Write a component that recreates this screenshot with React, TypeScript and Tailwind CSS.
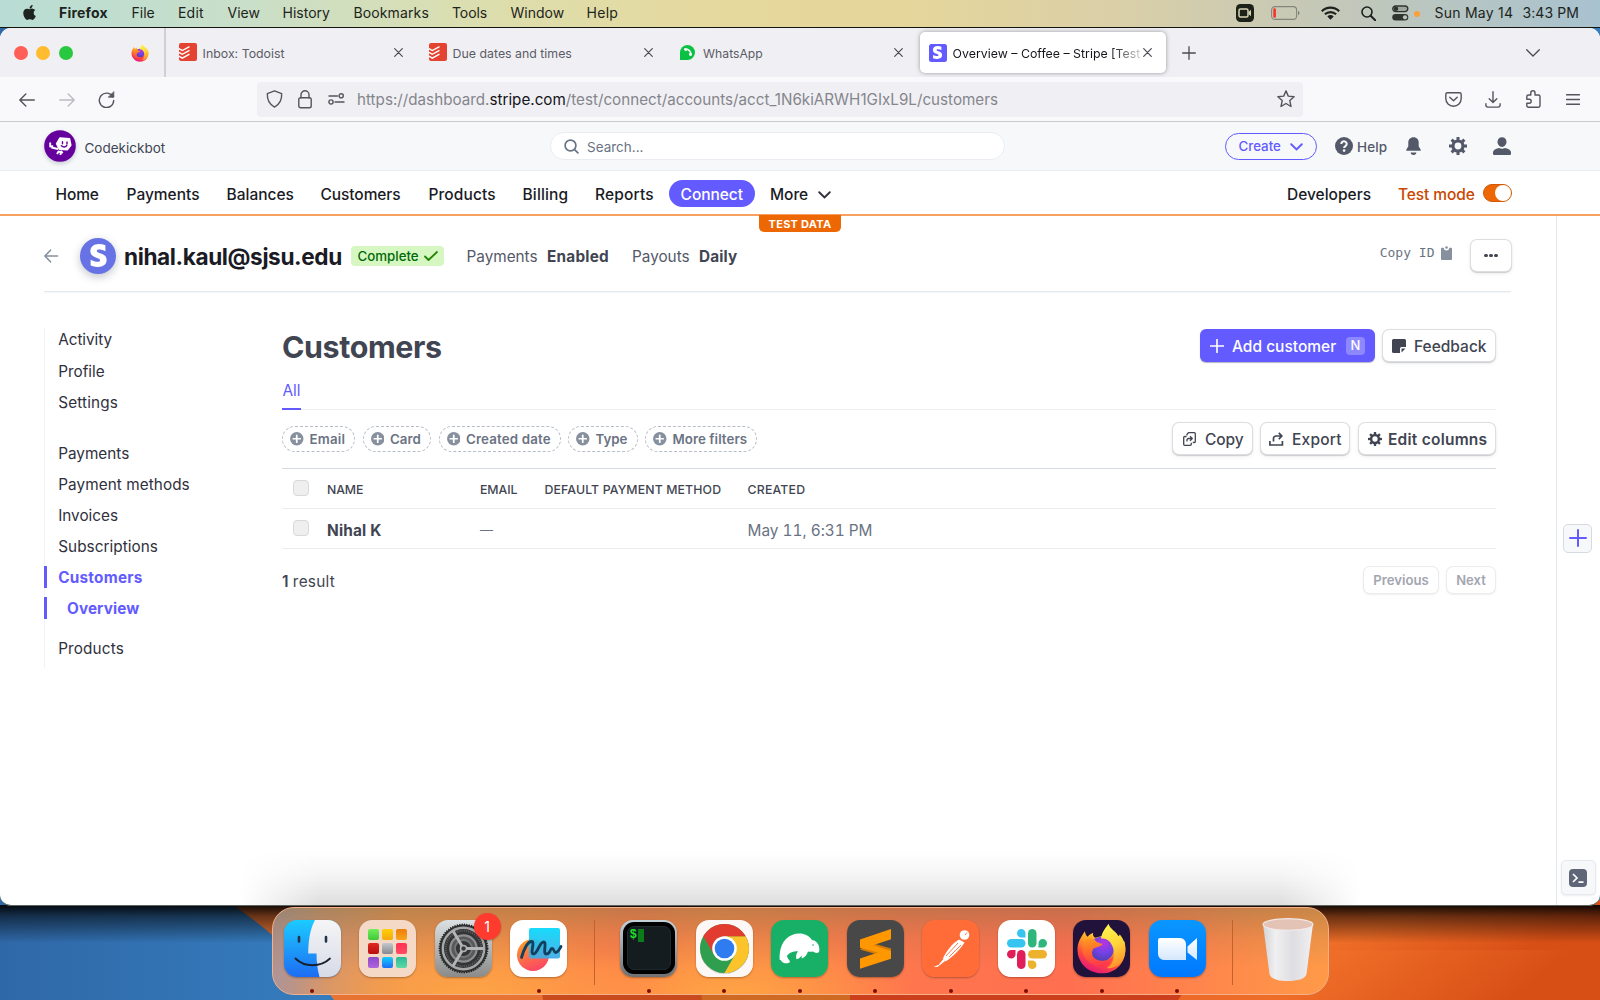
import React from "react";
import { FaApple, FaPhoneAlt, FaStripeS } from "react-icons/fa";

const menuItems = [
  { label: "Firefox", cls: "w-[72.5px] font-bold tracking-[0.2px]" },
  { label: "File", cls: "w-[46.5px]" },
  { label: "Edit", cls: "w-[49.5px] tracking-[0.2px]" },
  { label: "View", cls: "w-[55px]" },
  { label: "History", cls: "w-[71px]" },
  { label: "Bookmarks", cls: "w-[98.5px] tracking-[0.12px]" },
  { label: "Tools", cls: "w-[58.5px] tracking-[-0.1px]" },
  { label: "Window", cls: "w-[76px]" },
  { label: "Help", cls: "w-[50px] tracking-[0.3px]" },
];

function MenuBar() {
  return (
    <div className="flex h-[27px] shrink-0 items-center bg-[linear-gradient(90deg,#b8ddd4_0%,#c9dfc9_15%,#dcdeae_30%,#e6d99e_45%,#e5d69b_57%,#dacfa8_70%,#c4c8b8_83%,#a8c2cf_100%)] pb-[2px] text-[14px] text-[#1d2420]">
      <FaApple className="ml-[21px] mr-[21px] size-[17px]" />
      {menuItems.map((m) => (
        <span key={m.label} className={`shrink-0 whitespace-nowrap ${m.cls}`}>{m.label}</span>
      ))}
      <div className="flex-1" />
      <svg className="mr-[16.5px] mt-px h-[18px] w-[18px]" viewBox="0 0 18 18">
        <rect width="18" height="18" rx="4.5" fill="#1d2219" />
        <rect x="3" y="5" width="9" height="8" rx="1.5" fill="none" stroke="#d8d3b4" strokeWidth="1.5" />
        <path d="M12.500 8l2.500-2.200v6.400L12.500 10z" fill="#d8d3b4" />
      </svg>
      <svg className="mr-[21px] mt-px h-[14px] w-[29px]" viewBox="0 0 29 14">
        <rect x="0.600" y="0.6" width="25" height="12.8" rx="3.500" fill="none" stroke="#85867b" strokeWidth="1.1" />
        <rect x="2.300" y="2.300" width="2.600" height="9.400" rx="1.2" fill="#f8312b" />
        <path d="M27 4.800q1.500 0.800 1.500 2.200t-1.500 2.200z" fill="#7c7e76" />
      </svg>
      <svg className="mr-[21.500px] h-[14px] w-[19px]" viewBox="0 0 19 14" fill="none" stroke="#1d211e" strokeWidth="2.2">
        <path d="M0.800 5.200a12.500 12.500 0 0 1 17.400 0" />
        <path d="M3.900 8.300a8.200 8.200 0 0 1 11.200 0" />
        <path d="M9.500 13.700L6.300 10.500a4.700 4.700 0 0 1 6.400 0z" fill="#1d211e" stroke="none" />
      </svg>
      <svg className="mr-[16px] mt-[2px] h-[15px] w-[15px]" viewBox="0 0 15 15" fill="none" stroke="#1d211e" strokeWidth="1.600">
        <circle cx="6" cy="6" r="5" />
        <path d="M9.700 9.700l4.500 4.500" strokeWidth="2" strokeLinecap="round" />
      </svg>
      <svg className="mr-[5px] mt-px h-[16px] w-[17px]" viewBox="0 0 17 16">
        <rect x="0.800" y="1" width="15" height="5.600" rx="2.800" fill="#9ea59d" stroke="#30342f" strokeWidth="1.400" />
        <circle cx="4" cy="3.800" r="2.200" fill="#30342f" />
        <rect x="0.300" y="9" width="16" height="6.600" rx="3.300" fill="#30342f" />
        <circle cx="13" cy="12.300" r="2.100" fill="#b8c4bd" />
      </svg>
      <span className="mr-[14.500px] mt-[2px] size-[6px] rounded-full bg-[#f8a13a]" />
      <span className="w-[88px] whitespace-nowrap tracking-[0.25px]">Sun May 14</span>
      <span className="w-[77.500px] whitespace-nowrap tracking-[0.07px]">3:43 PM</span>
    </div>
  );
}

function FirefoxLogo({ className, id }: { className: string; id: string }) {
  return (
    <svg className={className} viewBox="3 2 51 52">
      <defs>
        <linearGradient id={`${id}-body`} x1="0.750" y1="0.1" x2="0.3" y2="1">
          <stop offset="0" stopColor="#ffe63c" />
          <stop offset="0.350" stopColor="#ff9d26" />
          <stop offset="0.650" stopColor="#ff4a3f" />
          <stop offset="1" stopColor="#e3147d" />
        </linearGradient>
        <linearGradient id={`${id}-flame`} x1="0.300" y1="0" x2="0.600" y2="1">
          <stop offset="0" stopColor="#fff44f" />
          <stop offset="0.500" stopColor="#ffd53a" />
          <stop offset="1" stopColor="#ff8f2a" />
        </linearGradient>
        <radialGradient id={`${id}-globe`} cx="0.600" cy="0.250" r="0.800">
          <stop offset="0" stopColor="#b833e1" />
          <stop offset="0.500" stopColor="#7542e5" />
          <stop offset="1" stopColor="#4a3fb0" />
        </radialGradient>
        <linearGradient id={`${id}-head`} x1="0.300" y1="0" x2="0.400" y2="1">
          <stop offset="0" stopColor="#ff9a1f" />
          <stop offset="0.450" stopColor="#ff6b2d" />
          <stop offset="1" stopColor="#ff3350" />
        </linearGradient>
      </defs>
      <path d="M4 29C4 22 7 17 11.500 10.300C12 13 13 15 14.500 16C16 14 18 13 20 12C19.500 14 20 16 22 17L38 13L52 21C54 30 53 38 47 45.500C42 51 35 53.400 28.500 53.300C14 53 4 42 4 29Z" fill={`url(#${id}-body)`} />
      <circle cx="28.500" cy="28.500" r="12.500" fill={`url(#${id}-globe)`} />
      <path d="M28 18C29 10 33 7 35.700 2.700C37 8 43 10 45.500 15C46.500 15.500 47 14.500 47 13.500C52 19 54.500 28 51.500 37C48 46 40 49 34 48C43 43 43.500 30 37.500 22C35 18.500 31 17.500 28 18Z" fill={`url(#${id}-flame)`} />
      <path d="M10 22C13 17 20 16 22 19.500C24 22.300 28 22.500 29.500 23.300C28 26.500 23 26 20 28.500C17 34 20 39.500 28 40.500C34 41 38 39 40.500 36C39 44 32 48 26 46.500C14 44 6 34 10 22Z" fill={`url(#${id}-head)`} />
    </svg>
  );
}

function TodoistIcon() {
  return (
    <svg className="size-[18px] shrink-0" viewBox="0 0 18 18">
      <rect width="18" height="18" rx="2" fill="#e44332" />
      <path d="M0 5.600l3.300 1.900L10.500 3.600M0 9.400l3.300 1.900L10.500 7.400M0 13.200l3.300 1.900L10.500 11.200" fill="none" stroke="#fff" strokeWidth="1.400" />
    </svg>
  );
}

function Close({ className = "" }: { className?: string }) {
  return (
    <svg className={`size-[9px] shrink-0 ${className}`} viewBox="0 0 9 9" stroke="#4b4b52" strokeWidth="1.200" strokeLinecap="round">
      <path d="M0.700 0.700l7.600 7.600M8.300 0.700L0.700 8.300" />
    </svg>
  );
}

function StripeTile() {
  return (
    <span className="flex size-[18px] shrink-0 items-center justify-center rounded-[2.5px] bg-[#635bff]">
      <FaStripeS className="size-[13px] text-white" />
    </span>
  );
}

function TabStrip() {
  return (
    <div className="flex h-[49px] shrink-0 items-center bg-[#f0f0f4] text-[12.35px] text-[#5b5b66]">
      <span className="ml-[14px] size-[14px] rounded-full bg-[#ff5f57]" />
      <span className="ml-[8.3px] size-[14px] rounded-full bg-[#febc2e]" />
      <span className="ml-[8.3px] size-[14px] rounded-full bg-[#28c840]" />
      <FirefoxLogo className="ml-[58.5px] h-[18px] w-[18px]" id="tab" />
      <span className="ml-[15px] h-full w-[2px] bg-[#cfcfd4]" />
      <div className="ml-[13px] flex w-[250px] items-center">
        <TodoistIcon />
        <span className="ml-[5.500px] w-[191px] pt-[3px]">Inbox: Todoist</span>
        <Close />
      </div>
      <div className="flex w-[250px] items-center">
        <TodoistIcon />
        <span className="ml-[5.500px] w-[191px] pt-[3px]">Due dates and times</span>
        <Close />
      </div>
      <div className="flex w-[240.500px] items-center">
        <span className="ml-[1px] flex size-[15px] items-center justify-center rounded-full rounded-bl-[4px] bg-[#0bc144]">
          <FaPhoneAlt className="size-[8px] rotate-[-90deg] -scale-x-100 text-white" />
        </span>
        <span className="ml-[8px] w-[190.500px] pt-[3px] text-[12.2px]">WhatsApp</span>
        <Close />
      </div>
      <div className="flex h-[41px] w-[246px] items-center rounded-[5px] bg-white pl-[9px] text-[#15141a] shadow-[0_0_4px_rgba(60,60,70,0.5)]">
        <StripeTile />
        <span className="ml-[6px] w-[189.500px] whitespace-nowrap pt-[3px] [mask-image:linear-gradient(90deg,#000_84%,rgba(0,0,0,0.200)_99%)]">Overview – Coffee – Stripe [Test</span>
        <Close className="ml-[1px]" />
      </div>
      <svg className="ml-[16.500px] size-[14px]" viewBox="0 0 14 14" stroke="#4b4b55" strokeWidth="1.300" strokeLinecap="round"><path d="M7 0.700v12.600M0.700 7h12.600" /></svg>
      <svg className="ml-auto mr-[60px] h-[8px] w-[14px]" viewBox="0 0 14 8" fill="none" stroke="#4b4b55" strokeWidth="1.300" strokeLinecap="round"><path d="M0.700 0.700L7 7l6.300-6.300" /></svg>
    </div>
  );
}

function NavBar() {
  const s = { fill: "none", stroke: "#54545e", strokeWidth: 1.4, strokeLinecap: "round" as const, strokeLinejoin: "round" as const };
  return (
    <div className="flex h-[45px] shrink-0 items-center border-b border-[#cccccf] bg-[#f9f9fb]">
      <svg className="ml-[18.500px] mt-px h-[14px] w-[16px]" viewBox="0 0 16 14" {...s}><path d="M15.300 7H0.900M6.800 0.900L0.800 7l6 6.100" /></svg>
      <svg className="ml-[24px] mt-px h-[14px] w-[16px]" viewBox="0 0 16 14" {...s} stroke="#bcbcc1"><path d="M0.700 7h14.400M9.200 0.900l6 6.100-6 6.100" /></svg>
      <svg className="ml-[23.500px] mt-px h-[17px] w-[17px]" viewBox="0 0 17 17" {...s}>
        <path d="M14.900 6A7.200 7.200 0 1 0 15.700 9.500" />
        <path d="M15.800 1v5.200h-5.200z" fill="#54545e" strokeWidth="0.800" />
      </svg>
      <div className="ml-[142px] flex h-[35px] w-[1046px] items-center rounded-[4px] bg-[#f0f0f4]">
        <svg className="ml-[9px] h-[18px] w-[17px]" viewBox="0 0 17 18" {...s}><path d="M8.500 0.900L15.700 3.600C15.900 9.500 13.800 14.500 8.500 17.100C3.200 14.500 1.100 9.500 1.300 3.600z" /></svg>
        <svg className="ml-[15px] h-[19px] w-[14px]" viewBox="0 0 14 19" {...s}><rect x="0.800" y="7.800" width="12.400" height="10" rx="1.800" /><path d="M3 7.800V4.800a4 4 0 0 1 8 0v3" /></svg>
        <svg className="ml-[16px] h-[12px] w-[17px]" viewBox="0 0 17 12" {...s}><path d="M1 3h8.500M7 9h9" /><circle cx="13.200" cy="2.800" r="2.100" /><circle cx="3" cy="9" r="2.100" /></svg>
        <div className="ml-[12px] w-[919.500px] whitespace-nowrap pt-[2px] text-[15.2px] tracking-[0.010px] text-[#85858c]">
          https://dashboard.<span className="text-[#15141a]">stripe.com</span>/test/connect/accounts/acct_1N6kiARWH1GIxL9L/customers
        </div>
        <svg className="h-[18px] w-[18px]" viewBox="0 0 18 18" {...s}><path d="M9 0.900l2.300 5.200 5.800 0.600-4.300 3.900 1.200 5.900L9 13.500l-5 3 1.200-5.900L0.900 6.700l5.800-0.600z" /></svg>
      </div>
      <svg className="ml-[142px] h-[15px] w-[17px]" viewBox="0 0 17 15" {...s}><path d="M2.500 0.800h12a1.700 1.700 0 0 1 1.700 1.700v4a7.700 7.700 0 0 1-15.400 0v-4A1.700 1.700 0 0 1 2.500 0.800z" /><path d="M4.800 5.200l3.700 3.600 3.700-3.600" /></svg>
      <svg className="ml-[23px] h-[17px] w-[16px]" viewBox="0 0 16 17" {...s}><path d="M8 0.800v10.600M4.200 7.800L8 11.500l3.800-3.700M0.900 12.800v1.300a2 2 0 0 0 2 2h10.200a2 2 0 0 0 2-2v-1.300" /></svg>
      <svg className="ml-[25px] h-[18px] w-[15px]" viewBox="0 0 15 18" {...s}><path d="M4.800 5V2.900a2.100 2.100 0 0 1 4.200 0V5h3.300a1.700 1.700 0 0 1 1.700 1.700v8.800a1.700 1.700 0 0 1-1.700 1.700H2.500a1.700 1.700 0 0 1-1.700-1.700v-2.300h2.400a2 2 0 0 0 0-4H0.800V6.700A1.700 1.700 0 0 1 2.500 5z" /></svg>
      <svg className="ml-[25px] h-[11px] w-[14px]" viewBox="0 0 14 11" {...s}><path d="M0.500 0.800h13M0.500 5.500h13M0.500 10.200h13" /></svg>
    </div>
  );
}

function Gear({ className }: { className: string }) {
  return (
    <svg className={className} viewBox="-9 -9 18 18" fill="none" stroke="currentColor">
      <circle r="5" strokeWidth="3.200" />
      {[0, 45, 90, 135, 180, 225, 270, 315].map((a) => (
        <path key={a} d="M0 -5.500V-9" strokeWidth="3" transform={`rotate(${a})`} />
      ))}
    </svg>
  );
}

function BotLogo() {
  return (
    <svg className="ml-[44px] size-[32px] drop-shadow-[0_2px_2px_rgba(60,66,87,0.250)]" viewBox="0 0 32 32">
      <circle cx="16" cy="16" r="15.800" fill="#66009c" />
      <path d="M16 8l9.500 0.700 1.300 6.500-3.500 4.500-8-0.500-2.700-5.500z" fill="#fff" stroke="#fff" strokeWidth="1.500" strokeLinejoin="round" />
      <path d="M18.500 11.800v2M23 12v2M17.300 15.800q3.200 2.600 5.500-0.300" fill="none" stroke="#66009c" strokeWidth="1.400" strokeLinecap="round" />
      <path d="M6.200 12.500v4l3-0.300M7.500 17.500l6.500 1.500M13 24l1.500-2.500 2.700 0.800 -1 2.700M16.500 21l2.300 2" fill="none" stroke="#fff" strokeWidth="1.900" strokeLinejoin="round" />
    </svg>
  );
}

function StripeHeader() {
  return (
    <div className="flex h-[49px] shrink-0 items-center border-b border-[#e9edf1] bg-[#f6f8fa] text-[13.5px]">
      <BotLogo />
      <span className="ml-[8.500px] w-[465.500px] pt-[4px] text-[#414552]">Codekickbot</span>
      <div className="flex h-[28px] w-[455px] items-center rounded-full border border-[#e9ecf0] bg-white text-[#687385]">
        <svg className="ml-[12.500px] size-[15px]" viewBox="0 0 15 15" fill="none" stroke="#687385" strokeWidth="1.700" strokeLinecap="round"><circle cx="6.500" cy="6.500" r="5.400" /><path d="M10.600 10.600l3.300 3.300" /></svg>
        <span className="ml-[8.500px] pt-[2px]">Search...</span>
      </div>
      <div className="ml-[220px] flex h-[27px] w-[92px] items-center rounded-full border-[1.5px] border-[#635bff] font-medium text-[#635bff]">
        <span className="ml-[12.500px] pt-[2px] text-[13.3px]">Create</span>
        <svg className="ml-[9.500px] mt-[2px] h-[8px] w-[13px]" viewBox="0 0 13 8" fill="none" stroke="#635bff" strokeWidth="1.900" strokeLinecap="round"><path d="M1.200 1.200l5.300 5.200 5.300-5.200" /></svg>
      </div>
      <svg className="ml-[18px] size-[18px]" viewBox="0 0 18 18">
        <circle cx="9" cy="9" r="9" fill="#545969" />
        <path d="M6.300 6.900a2.700 2.600 0 1 1 4.300 2.100c-1 0.700-1.500 1-1.500 2" fill="none" stroke="#f6f8fa" strokeWidth="2.100" />
        <circle cx="9.100" cy="13.600" r="1.300" fill="#f6f8fa" />
      </svg>
      <span className="ml-[4px] w-[49px] pt-[2px] font-medium tracking-[0.1px] text-[#545969]">Help</span>
      <svg className="h-[18px] w-[15px]" viewBox="0 0 15 18" fill="#545969"><path d="M7.500 0.200c3.300 0 5.200 2.300 5.200 5.300v3.800l2 3.500v0.900H0.300v-0.900l2-3.500V5.500c0-3 1.900-5.300 5.200-5.300zM4.700 15.500h5.600a2.800 2.400 0 0 1-5.600 0z" /></svg>
      <Gear className="ml-[28px] size-[18px] text-[#545969]" />
      <svg className="ml-[26px] h-[18px] w-[18px]" viewBox="0 0 18 18" fill="#545969"><path d="M9 0.200c2.700 0 4.500 2 4.500 4.600S11.500 10 9 10 4.500 7.400 4.500 4.800 6.300 0.200 9 0.200zM0 15.500c0-2.400 2-3.600 6-4.500 2 1 4 1 6 0 4 0.900 6 2.100 6 4.500v1.200a1.200 1.200 0 0 1-1.200 1.200H1.200A1.200 1.200 0 0 1 0 16.700z" /></svg>
    </div>
  );
}

const navItems = [
  { label: "Home", cls: "w-[71px] tracking-[-0.1px]" },
  { label: "Payments", cls: "w-[100px]" },
  { label: "Balances", cls: "w-[94px]" },
  { label: "Customers", cls: "w-[108px] tracking-[-0.08px]" },
  { label: "Products", cls: "w-[94px] tracking-[0.1px]" },
  { label: "Billing", cls: "w-[72.5px] tracking-[0.15px]" },
  { label: "Reports", cls: "w-[74px] tracking-[0.15px]" },
];

function MainNav() {
  return (
    <div className="relative flex h-[45px] shrink-0 items-center border-b-2 border-[#f8a062] bg-white pl-[55.5px] text-[15.5px] font-medium text-[#1a1b25]">
      {navItems.map((n) => (
        <span key={n.label} className={`shrink-0 pt-[4px] whitespace-nowrap ${n.cls}`}>{n.label}</span>
      ))}
      <span className="mt-px flex h-[27px] w-[85.5px] items-center justify-center rounded-full bg-[#635bff] pt-[3px] tracking-[-0.05px] text-white">Connect</span>
      <span className="ml-[15.500px] w-[47.500px] pt-[4px] tracking-[-0.05px]">More</span>
      <svg className="mt-[4px] h-[8px] w-[13px]" viewBox="0 0 13 8" fill="none" stroke="#30313d" strokeWidth="1.900" strokeLinecap="round"><path d="M1.200 1.200l5.300 5.200 5.300-5.200" /></svg>
      <span className="ml-[456.500px] w-[111px] pt-[4px]">Developers</span>
      <span className="w-[85px] pt-[4px] tracking-[-0.1px] text-[#c84801]">Test mode</span>
      <span className="flex h-[18px] w-[29px] items-center justify-end rounded-full border border-[#ce5a08] bg-[#ed6704]">
        <span className="h-full w-[16px] rounded-full bg-white" />
      </span>
      <span className="absolute left-[759px] top-[43.500px] flex h-[17px] w-[82px] items-center justify-center rounded-b-[5px] bg-[#ed6704] pt-[2px] text-[11px] font-bold tracking-[0.26px] text-white">TEST DATA</span>
    </div>
  );
}

const buttonCls = "flex items-center rounded-[6px] bg-white font-medium text-[#414552] shadow-[0_0_0_1px_#dddee1,0_1px_1px_1px_rgba(0,0,0,0.160),0_2px_5px_rgba(60,66,87,0.100)]";

function AccountHeader() {
  return (
    <div className="mr-[45px] flex h-[76px] items-center border-b border-[#e3e8ee] pt-[4px] text-[15.3px] text-[#545969] shadow-[0_2px_2px_-1px_#f3f5f8]">
      <svg className="h-[14px] w-[15px]" viewBox="0 0 15 14" fill="none" stroke="#87909f" strokeWidth="1.600" strokeLinecap="round" strokeLinejoin="round"><path d="M13.500 7H1M6.500 1.200L0.900 7l5.600 5.800" /></svg>
      <span className="ml-[21px] flex size-[36px] items-center justify-center rounded-full bg-[#6772e5] shadow-[0_3px_8px_rgba(60,66,87,0.300)]">
        <FaStripeS className="size-[23px] text-white" />
      </span>
      <span className="ml-[8px] w-[227px] whitespace-nowrap pt-[2px] text-[22.600px] font-bold tracking-[-0.390px] text-[#1a1b25]">nihal.kaul@sjsu.edu</span>
      <span className="flex h-[20px] w-[93px] items-center rounded-[4px] bg-[#d7f7c2] pl-[6.500px] pt-[2px] text-[13.3px] font-medium text-[#006908]">
        Complete
        <svg className="mb-[2px] ml-[5px] h-[10px] w-[14px]" viewBox="0 0 14 10" fill="none" stroke="#228403" strokeWidth="1.800" strokeLinecap="round" strokeLinejoin="round"><path d="M1 5.500l3.500 3.500L13 1" /></svg>
      </span>
      <span className="ml-[22.500px] w-[80.500px] pt-[3px]">Payments</span>
      <span className="w-[85px] pt-[3px] font-bold tracking-[0.250px] text-[#414552]">Enabled</span>
      <span className="w-[67px] pt-[3px]">Payouts</span>
      <span className="w-[80px] pt-[3px] font-bold tracking-[0.150px] text-[#414552]">Daily</span>
      <span className="ml-auto mb-[6px] flex items-center font-['DejaVu_Sans_Mono',monospace] text-[13px] text-[#6a7383]">
        Copy ID
        <svg className="ml-[6.500px] h-[14px] w-[11px]" viewBox="0 0 11 14" fill="#87909f"><path d="M1 1.800h1.800a2.700 2.700 0 0 0 5.400 0H10a1 1 0 0 1 1 1V13a1 1 0 0 1-1 1H1a1 1 0 0 1-1-1V2.800a1 1 0 0 1 1-1z" /><circle cx="5.500" cy="1.500" r="1.300" /></svg>
      </span>
      <button className={`${buttonCls} ml-[19px] h-[31px] w-[40px] justify-center gap-[1.500px]`}>
        <span className="size-[3.500px] rounded-full bg-[#414552]" />
        <span className="size-[3.500px] rounded-full bg-[#414552]" />
        <span className="size-[3.500px] rounded-full bg-[#414552]" />
      </button>
    </div>
  );
}

const sideItems = [
  { label: "Activity", cls: "mb-[8.75px] tracking-[-0.050px]" },
  { label: "Profile", cls: "mb-[8.75px]" },
  { label: "Settings", cls: "mb-[28.400px] tracking-[0.150px]" },
  { label: "Payments", cls: "mb-[8.75px]" },
  { label: "Payment methods", cls: "mb-[8.75px] tracking-[0.080px]" },
  { label: "Invoices", cls: "mb-[8.75px]" },
  { label: "Subscriptions", cls: "mb-[8.75px] tracking-[0.050px]" },
  { label: "Customers", cls: "mb-[8.75px] font-bold text-[#635bff] tracking-[0.250px]", active: true },
  { label: "Overview", cls: "mb-[17.300px] font-bold text-[#635bff] tracking-[0.100px]", active: true, nested: true },
  { label: "Products", cls: "tracking-[0.150px]" },
];

function SideNav() {
  return (
    <div className="h-[340px] w-[238px] shrink-0 border-l-[1.5px] border-[#f0f2f6] text-[15.3px] text-[#30313d]">
      {sideItems.map((i) => (
        <div key={i.label} className={`flex h-[22.400px] items-center ${i.cls}`}>
          <span className={`-ml-[1px] h-full w-[3px] ${i.active ? "bg-[#635bff]" : ""}`} />
          <span className={`pt-[3.500px] ${i.nested ? "ml-[20px]" : "ml-[11.200px]"}`}>{i.label}</span>
        </div>
      ))}
    </div>
  );
}

const filters = [
  { label: "Email", cls: "w-[73px] tracking-[0.200px]" },
  { label: "Card", cls: "w-[68.500px] tracking-[0.050px]" },
  { label: "Created date", cls: "w-[122px] tracking-[0.150px]" },
  { label: "Type", cls: "w-[69.500px]" },
  { label: "More filters", cls: "w-[112px] tracking-[0.050px]" },
];

function Checkbox() {
  return <span className="ml-[11px] mr-[18px] mb-[2px] size-[16px] rounded-[4px] border border-[#d9d9dc] bg-[#efeff0]" />;
}

function CustomerPanel() {
  return (
    <div className="w-[1214px]">
      <div className="flex h-[36px] items-start text-[15.5px]">
        <h1 className="flex-1 pt-[2px] text-[30.400px] leading-[35px] font-bold tracking-[-0.400px] text-[#414552]">Customers</h1>
        <button className="mt-[1px] flex h-[33px] w-[175px] items-center rounded-[6px] bg-[#635bff] font-medium text-white shadow-[0_1px_1px_rgba(20,19,78,0.320)]">
          <svg className="ml-[10px] size-[14px]" viewBox="0 0 13 13" stroke="#fff" strokeWidth="1.500" strokeLinecap="round"><path d="M6.500 0.500v12M0.500 6.500h12" /></svg>
          <span className="ml-[8.500px] w-[114px] pt-[3px] text-left">Add customer</span>
          <span className="flex h-[18px] w-[19px] items-center justify-center rounded-[4px] bg-[#8e88ff] pt-px text-[13px]">N</span>
        </button>
        <button className={`${buttonCls} ml-[8px] mr-px mt-[2px] h-[31px] w-[112.500px]`}>
          <svg className="ml-[9px] size-[14px]" viewBox="0 0 14 14" fill="#414552"><path d="M1.500 0h11A1.500 1.500 0 0 1 14 1.500V8H9.500A1.500 1.500 0 0 0 8 9.500V14H1.500A1.500 1.500 0 0 1 0 12.500v-11A1.500 1.500 0 0 1 1.500 0zM9.500 9.500h4L9.500 13.500z" /></svg>
          <span className="ml-[8.500px] pt-[3px]">Feedback</span>
        </button>
      </div>
      <div className="flex h-[46px] items-end border-b border-[#ebeef1] text-[15.400px] text-[#635bff]">
        <span className="-mb-px flex h-[37px] w-[19px] items-center border-b-2 border-[#635bff] pl-[0.500px] pt-px">All</span>
      </div>
      <div className="flex h-[58px] items-center text-[15.500px]">
        <div className="flex flex-1 gap-[7.500px] text-[13.300px] font-semibold text-[#6a7383]">
          {filters.map((f) => (
            <span key={f.label} className={`flex h-[26px] items-center whitespace-nowrap rounded-full border border-dashed border-[#b5bdc8] pl-[7px] ${f.cls}`}>
              <svg className="mr-[6px] size-[13.500px] shrink-0" viewBox="0 0 14 14"><circle cx="7" cy="7" r="7" fill="#87909f" /><path d="M7 3.400v7.200M3.400 7h7.200" stroke="#fff" strokeWidth="1.800" strokeLinecap="round" /></svg>
              <span className="pt-[2px]">{f.label}</span>
            </span>
          ))}
        </div>
        <button className={`${buttonCls} mb-[1px] h-[31px] w-[79px]`}>
          <svg className="ml-[10px] h-[14px] w-[13px]" viewBox="0 0 13 14" fill="none" stroke="#414552" strokeWidth="1.300" strokeLinejoin="round"><path d="M4 3.500V2.200L5.500 0.700h5.800a1 1 0 0 1 1 1v7.800a1 1 0 0 1-1 1H9.800M3.500 4.500h-1.800a1 1 0 0 0-1 1v6.800a1 1 0 0 0 1 1h5.600a1 1 0 0 0 1-1v-1.500M4 9.500V8a1.500 1.500 0 0 1 1.500-1.500h3.200M7 4.300l2.300 2.200L7 8.700" /></svg>
          <span className="ml-[9.500px] pt-[2px] tracking-[-0.100px]">Copy</span>
        </button>
        <button className={`${buttonCls} mb-[1px] ml-[9px] h-[31px] w-[88.500px]`}>
          <svg className="ml-[8.500px] h-[14px] w-[15px]" viewBox="0 0 15 14" fill="none" stroke="#414552" strokeWidth="1.700"><path d="M0.900 9v4h12.500V9" /><path d="M4.500 9.500V6.500a2.500 2.500 0 0 1 2.500-2.500h5M9.800 0.900l3 3.100-3 3.100" /></svg>
          <span className="ml-[8px] pt-[2px] tracking-[0.200px]">Export</span>
        </button>
        <button className={`${buttonCls} mb-[1px] ml-[9.500px] mr-px h-[31px] w-[136.500px] font-semibold`}>
          <Gear className="ml-[9px] size-[14px]" />
          <span className="ml-[6.500px] pt-[2px] tracking-[0.240px]">Edit columns</span>
        </button>
      </div>
      <div className="flex h-[41px] items-center border-y border-t-[#d5dbe1] border-b-[#ebeef1] text-[12.300px] font-medium text-[#414552]">
        <Checkbox />
        <span className="w-[153px] pt-[3px] tracking-[-0.100px]">NAME</span>
        <span className="w-[64.500px] pt-[3px] tracking-[-0.050px]">EMAIL</span>
        <span className="w-[203px] pt-[3px] tracking-[0.130px]">DEFAULT PAYMENT METHOD</span>
        <span className="pt-[3px] tracking-[0.200px]">CREATED</span>
      </div>
      <div className="flex h-[40px] items-center border-b border-[#ebeef1] text-[15.400px] text-[#6a7383]">
        <Checkbox />
        <span className="w-[153px] pt-[4px] font-bold tracking-[0.150px] text-[#414552]">Nihal K</span>
        <span className="w-[267.500px] pt-[2px]"><span className="text-[13px]">—</span></span>
        <span className="pt-[4px] tracking-[-0.020px] tabular-nums">May 11, 6:31 PM</span>
      </div>
      <div className="mt-[17px] flex h-[28px] items-center text-[15.400px] text-[#414552]">
        <span className="flex-1 pt-[3px]"><b className="font-semibold">1</b> <span className="tracking-[0.250px]">result</span></span>
        <span className={`${buttonCls} mb-px h-[26px] w-[74px] justify-center pt-[3px] text-[13.200px] !font-semibold !text-[#a3a6b0] !shadow-[0_0_0_1px_#ececef,0_1px_2px_1px_rgba(0,0,0,0.070)]`}>Previous</span>
        <span className={`${buttonCls} mb-px ml-[9px] mr-px h-[26px] w-[48px] justify-center pt-[3px] text-[13px] !font-semibold !text-[#a3a6b0] !shadow-[0_0_0_1px_#ececef,0_1px_2px_1px_rgba(0,0,0,0.070)]`}>Next</span>
      </div>
    </div>
  );
}

function RightRail() {
  return (
    <div className="flex w-[44px] flex-col items-center justify-between border-l border-[#e6e8ec] pb-[11px] pt-[307.500px]">
      <span className="-ml-[2px] flex size-[29px] items-center justify-center rounded-[5px] border border-[#d5dbe1] bg-[#f6f8fa]">
        <svg className="size-[18px]" viewBox="0 0 18 18" stroke="#635bff" strokeWidth="2" strokeLinecap="round"><path d="M9 1v16M1 9h16" /></svg>
      </span>
      <span className="-ml-px flex size-[33px] items-center justify-center rounded-[4px] bg-[#f6f8fa] shadow-[0_0_0_1px_#e6e9ee,0_1px_3px_rgba(0,0,0,0.150)]">
        <svg className="size-[18px]" viewBox="0 0 18 18"><rect width="18" height="18" rx="4" fill="#5f6678" /><path d="M4 5l4 4-4 4M9.500 13.200h5" fill="none" stroke="#fff" strokeWidth="1.700" /></svg>
      </span>
    </div>
  );
}

function Wallpaper() {
  return (
    <svg className="absolute inset-0 size-full" viewBox="0 0 1600 1000">
      <defs>
        <linearGradient id="wp-blue" x1="0" x2="0.200"><stop offset="0" stopColor="#2f68a8" /><stop offset="1" stopColor="#357cbd" /></linearGradient>
        <linearGradient id="wp-right" x1="0" x2="1" y2="0.300"><stop offset="0" stopColor="#e8672a" /><stop offset="0.500" stopColor="#ee6d27" /><stop offset="1" stopColor="#d84f16" /></linearGradient>
        <linearGradient id="wp-shade" x1="0" x2="0" y1="0" y2="1"><stop offset="0" stopColor="#000" stopOpacity="0.920" /><stop offset="0.300" stopColor="#000" stopOpacity="0.550" /><stop offset="1" stopColor="#000" stopOpacity="0" /></linearGradient>
      </defs>
      <rect width="1600" height="1000" fill="url(#wp-blue)" />
      <path d="M226 900C270 930 310 965 334 1000H560V900z" fill="#e87434" />
      <path d="M530 900H710V1000H543z" fill="#c94a1c" />
      <path d="M690 900H900V1000H702z" fill="#cf6a22" />
      <path d="M850 900H1240V1000H850z" fill="#cc3f1c" />
      <path d="M1220 940L1600 900V1000H1178z" fill="url(#wp-right)" />
      <path d="M1230 900H1600V950H1230z" fill="url(#wp-right)" />
      <rect y="905" width="1600" height="38" fill="url(#wp-shade)" />
    </svg>
  );
}

function Finder() {
  return (
    <svg viewBox="0 0 57 57">
      <defs>
        <linearGradient id="fd-l" x1="0" x2="0" y1="0" y2="1"><stop offset="0" stopColor="#1ccbff" /><stop offset="1" stopColor="#1e6cf3" /></linearGradient>
        <linearGradient id="fd-r" x1="0" x2="0" y1="0" y2="1"><stop offset="0" stopColor="#f6f5f7" /><stop offset="1" stopColor="#d6dbe7" /></linearGradient>
      </defs>
      <rect width="57" height="57" fill="url(#fd-l)" />
      <path d="M31 0C26 9 24.500 20 24.200 33.500H32.500C32.500 42 33.500 50 35.500 57H57V0z" fill="url(#fd-r)" />
      <path d="M15 17v4.500M42 17v4.500" stroke="#253347" strokeWidth="2.600" strokeLinecap="round" />
      <path d="M11.500 38.500c9 9 25 9 34.500 0" fill="none" stroke="#17202d" strokeWidth="1.800" strokeLinecap="round" />
    </svg>
  );
}

const padColors = [
  "bg-[linear-gradient(#71ee5b,#3fc83a)]", "bg-[linear-gradient(#ffcf0a,#f5a90b)]", "bg-[linear-gradient(#ee7d0a,#f7a51c)]",
  "bg-[linear-gradient(#e02a20,#b80d10)]", "bg-[linear-gradient(#c3c8cc,#83898f)]", "bg-[linear-gradient(#ff2f55,#ff4d63)]",
  "bg-[linear-gradient(#8a49c9,#b165dd)]", "bg-[linear-gradient(#12cdfb,#1f6df5)]", "bg-[linear-gradient(#27b998,#5fd9a5)]",
];

function Launchpad() {
  return (
    <div className="grid size-full grid-cols-[11px_11px_11px] place-content-center gap-[3px] bg-[#f3d9c6]">
      {padColors.map((c) => <span key={c} className={`size-[11px] rounded-[2px] ${c}`} />)}
    </div>
  );
}

function Settings() {
  return (
    <svg viewBox="0 0 57 57">
      <defs><linearGradient id="st-b" x1="0" x2="0" y1="0" y2="1"><stop offset="0" stopColor="#dbe1e4" /><stop offset="1" stopColor="#8a8b89" /></linearGradient></defs>
      <rect width="57" height="57" fill="url(#st-b)" />
      <g fill="none" transform="translate(28.5 28.5)">
        <circle r="24" fill="#333435" />
        <circle r="24" stroke="#222" strokeWidth="1.800" strokeDasharray="1.200 1.200" />
        <circle r="20.700" stroke="#a6a7a7" strokeWidth="2.400" />
        <circle r="17.800" stroke="#5b5c5d" strokeWidth="2" strokeDasharray="1.100 1.100" />
        <circle r="13.200" fill="#57595a" stroke="#8d8f90" strokeWidth="2.200" />
        <circle r="8.500" fill="#333536" stroke="#747677" strokeWidth="1.800" />
        <path d="M0 0H20M0 0L-10.500 -17.500M0 0L-10.500 17.500" stroke="#b4b6b6" strokeWidth="2.800" />
        <circle r="3" fill="#3a3b3c" stroke="#b4b6b6" strokeWidth="1.500" />
      </g>
    </svg>
  );
}

function Freeform() {
  return (
    <svg viewBox="0 0 57 57">
      <defs>
        <linearGradient id="ff-c" x1="0" x2="0.400" y1="0" y2="1"><stop offset="0" stopColor="#ffa51f" /><stop offset="1" stopColor="#fb4b62" /></linearGradient>
        <linearGradient id="ff-s" x1="0" x2="0" y1="0" y2="1"><stop offset="0" stopColor="#04d8fb" /><stop offset="1" stopColor="#3fa9e6" /></linearGradient>
      </defs>
      <rect width="57" height="57" fill="#fff" />
      <circle cx="23" cy="35" r="16" fill="url(#ff-c)" />
      <rect x="19" y="8" width="31" height="30.500" rx="2" fill="url(#ff-s)" fillOpacity="0.920" />
      <path d="M11.500 37.500C14 29 18 21.500 21.500 21.500c4 0-2 12.500 2 12.500s6-12 10-12-1.500 12 3 12 3-5.500 5.500-5.500 1.500 4.500 4 4 3.500-3.500 5-6" fill="none" stroke="#12405f" strokeWidth="2.800" strokeLinecap="round" />
    </svg>
  );
}

function Terminal() {
  return (
    <div className="size-full bg-[linear-gradient(#c3d2d9,#6f7072)] p-[2.500px]">
      <div className="size-full rounded-[11px] bg-black p-[4px]">
        <div className="flex size-full rounded-[7px] border border-[#1f2a2e] bg-[#141c20] pl-[2px] pt-[1px] font-['Liberation_Mono',monospace] text-[12px] leading-[14px] font-bold text-[#1de02b]">
          $<span className="ml-[1.500px] mt-px h-[12.500px] w-[6px] bg-[#0c7c1a]" />
        </div>
      </div>
    </div>
  );
}

function Chrome() {
  return (
    <svg viewBox="0 0 57 57">
      <rect width="57" height="57" fill="#fdf8f5" />
      <circle cx="28.500" cy="29.500" r="24.500" fill="#000" fillOpacity="0.150" />
      <circle cx="28.500" cy="28.500" r="24.500" fill="#2f9e4f" />
      <path d="M28.500 16.250H49.700A24.500 24.500 0 0 1 28.500 53L39.100 34.600z" fill="#fcc32a" />
      <path d="M28.500 16.250H49.700A24.500 24.500 0 0 0 7.300 16.250L17.900 34.600z" fill="#e23c30" />
      <circle cx="28.500" cy="28.500" r="12.300" fill="#fff" />
      <circle cx="28.500" cy="28.500" r="9.800" fill="#2f7bf0" />
    </svg>
  );
}

function Manatee() {
  return (
    <svg viewBox="0 0 57 57">
      <rect width="57" height="57" fill="#17b066" />
      <path d="M8.700 40C8 30 11 19 21 15c8-3 16-1 20 5 3 0.300 5 2 6.500 5 0.800 2.500 1.300 5 0.500 7-2 2-4.500 0.500-6-0.500-2 0.300-3.500 0.300-5 0-1 3.500-3 5.500-6 7-0.500-1-0.300-2-0.200-3-1.500 2-3 3.200-5.300 3.800-1-2.500-0.300-5.500 1.500-8-5 0-8 1-11 4.500 0.500 3.500 3 4.500 3 6-1.500 2.200-7.500 2.500-9.300-1.800z" fill="#fff" />
      <circle cx="42" cy="25" r="0.800" fill="#17b066" />
    </svg>
  );
}

function Sublime() {
  return (
    <svg viewBox="0 0 57 57">
      <rect width="57" height="57" fill="#484848" />
      <path d="M13 29.500L44 38.500V28.500L23 22.500z" fill="#d97c00" />
      <path d="M13 19.500L44 9V19.300L26 25.200L44 31V38.800L13 48.700V38.500L31 32.500L13 27.800z" fill="#ff9800" />
    </svg>
  );
}

function Postman() {
  return (
    <svg viewBox="0 0 57 57">
      <rect width="57" height="57" fill="#ff6c37" />
      <circle cx="42.500" cy="15" r="4.800" fill="#fff" />
      <path d="M37 19.500l5.500 3c-4 6.500-11 14-19 19l-2.500-3.200C24.500 31 30 23.500 37 19.500z" fill="#fff" />
      <path d="M22.500 37.500l-6 7.500-5 1.500 4 0.600 7.500-6z" fill="#fff" />
      <path d="M36 23L24 36M39 25L27 37M43 15l2-2.500" stroke="#ff6c37" strokeWidth="0.900" />
    </svg>
  );
}

function Slack() {
  return (
    <svg viewBox="0 0 57 57">
      <rect width="57" height="57" fill="#fff" />
      <g fill="#36c5f0"><rect x="9" y="19" width="18.500" height="8.500" rx="4.250" /><path d="M27.500 17.500H23.300a4.250 4.250 0 1 1 4.200-4.250z" /></g>
      <g fill="#2eb67d"><rect x="30" y="9" width="8.500" height="18.500" rx="4.250" /><path d="M40.500 27.500v-4.200a4.250 4.250 0 1 1 4.250 4.200z" /></g>
      <g fill="#ecb22e"><rect x="30" y="30" width="19" height="8.500" rx="4.250" /><path d="M30 40.500h4.200a4.250 4.250 0 1 1-4.200 4.250z" /></g>
      <g fill="#e01e5a"><rect x="19" y="30" width="8.500" height="19" rx="4.250" /><path d="M17.500 30v4.200a4.250 4.250 0 1 1-4.250-4.200z" /></g>
    </svg>
  );
}

function Zoom() {
  return (
    <svg viewBox="0 0 57 57">
      <defs>
        <linearGradient id="zm-b" x1="0" x2="0" y1="0" y2="1"><stop offset="0" stopColor="#0a97ff" /><stop offset="1" stopColor="#0078ff" /></linearGradient>
        <linearGradient id="zm-c" x1="0" x2="0" y1="0" y2="1"><stop offset="0" stopColor="#fff" /><stop offset="1" stopColor="#d5e7fd" /></linearGradient>
      </defs>
      <rect width="57" height="57" fill="url(#zm-b)" />
      <path d="M11 18H31a6 6 0 0 1 6 6V40H15a6 6 0 0 1-6-6V20a2 2 0 0 1 2-2zM38.500 26.500L48 18V40L38.500 32.500z" fill="url(#zm-c)" />
    </svg>
  );
}

function Trash() {
  return (
    <svg className="ml-[28.500px] mt-[-2px] h-[64px] w-[52px]" viewBox="0 0 52 64">
      <defs><linearGradient id="tr-b" x1="0" x2="1"><stop offset="0" stopColor="#d3d4d8" /><stop offset="0.250" stopColor="#f0f0f2" /><stop offset="0.600" stopColor="#dedee2" /><stop offset="1" stopColor="#f0eff1" /></linearGradient></defs>
      <path d="M1 6L7.500 56C8.500 61 17 63 26 63S43.500 61 44.500 56L51 6z" fill="url(#tr-b)" />
      <ellipse cx="26" cy="6.500" rx="25" ry="5.800" fill="#e2c3b5" stroke="#f1e9e6" strokeWidth="1.200" />
    </svg>
  );
}

function AppIcon({ children, running, last, badge }: { children: React.ReactNode; running?: boolean; last?: boolean; badge?: string }) {
  return (
    <div className={`relative flex w-[57px] shrink-0 flex-col items-center ${last ? "" : "mr-[18.550px]"}`}>
      <div className="size-[57px] overflow-hidden rounded-[13px] shadow-[0_1px_2px_rgba(0,0,0,0.300)]">{children}</div>
      {running && <span className="mt-[12px] size-[4px] rounded-full bg-[#7a0d05]" />}
      {badge && <span className="absolute -right-[9px] -top-[7px] flex size-[27px] items-center justify-center rounded-full bg-[#ff3b30] text-[14px] text-white shadow-[0_1px_2px_rgba(0,0,0,0.250)]">{badge}</span>}
    </div>
  );
}

function Dock() {
  return (
    <div className="absolute left-[271.500px] top-[907px] flex h-[87.500px] w-[1057px] items-start rounded-[22px] border border-[#f3b08a] bg-[linear-gradient(180deg,rgba(120,110,70,0.420)_0%,rgba(150,110,70,0.180)_35%,rgba(255,255,255,0)_70%),radial-gradient(ellipse_180px_70px_at_200px_90px,#ffa544_0%,rgba(255,165,68,0)_100%),radial-gradient(ellipse_180px_70px_at_460px_90px,#ffa544_0%,rgba(255,165,68,0)_100%),linear-gradient(90deg,#ae9496_0%,#d0946f_5%,#ee9350_12%,#fb8c48_25%,#ff7d4a_34%,#fb8848_42%,#ff784d_58%,#ff6f50_75%,#ff854c_88%,#ff9a48_100%)] pl-[11px] pt-[11.500px]">
      <AppIcon running><Finder /></AppIcon>
      <AppIcon><Launchpad /></AppIcon>
      <AppIcon badge="1"><Settings /></AppIcon>
      <AppIcon running last><Freeform /></AppIcon>
      <span className="ml-[26.500px] mr-[25px] h-[65px] w-[1.500px] bg-[#c4622c]" />
      <AppIcon running><Terminal /></AppIcon>
      <AppIcon running><Chrome /></AppIcon>
      <AppIcon running><Manatee /></AppIcon>
      <AppIcon running><Sublime /></AppIcon>
      <AppIcon running><Postman /></AppIcon>
      <AppIcon running><Slack /></AppIcon>
      <AppIcon running>
        <div className="flex size-full items-center justify-center bg-[#20123a]"><FirefoxLogo className="size-[51px]" id="dock" /></div>
      </AppIcon>
      <AppIcon running last><Zoom /></AppIcon>
      <span className="ml-[26px] h-[65px] w-[1.500px] bg-[#c4622c]" />
      <Trash />
    </div>
  );
}

export default function App() {
  return (
    <div className="relative h-[1000px] w-[1600px] overflow-hidden font-[Inter,sans-serif] antialiased">
      <Wallpaper />
      <div className="relative flex h-[906px] flex-col">
        <MenuBar />
        <div className="h-px shrink-0 bg-[#14140f]" />
        <div className="relative flex flex-1 flex-col overflow-hidden rounded-[11px] border-b border-[#5d6460] bg-white">
          <TabStrip />
          <NavBar />
          <StripeHeader />
          <MainNav />
          <div className="flex flex-1">
            <div className="w-[1556px] pl-[44px]">
              <AccountHeader />
              <div className="mt-[36px] flex">
                <SideNav />
                <CustomerPanel />
              </div>
            </div>
            <RightRail />
          </div>
          <div className="pointer-events-none absolute bottom-0 left-[240px] h-[55px] w-[1120px] bg-[linear-gradient(180deg,rgba(0,0,0,0)_0%,rgba(0,0,0,0.040)_45%,rgba(0,0,0,0.130)_100%)] [mask-image:linear-gradient(90deg,transparent_0%,#000_7%,#000_93%,transparent_100%)]" />
        </div>
      </div>
      <Dock />
    </div>
  );
}
